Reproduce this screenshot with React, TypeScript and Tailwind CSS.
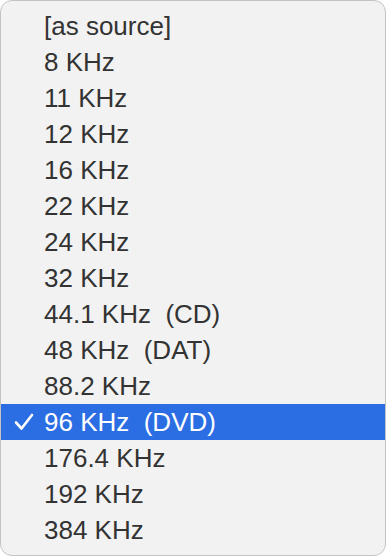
const rates = [
  "[as source]",
  "8 KHz",
  "11 KHz",
  "12 KHz",
  "16 KHz",
  "22 KHz",
  "24 KHz",
  "32 KHz",
  "44.1 KHz  (CD)",
  "48 KHz  (DAT)",
  "88.2 KHz",
  "96 KHz  (DVD)",
  "176.4 KHz",
  "192 KHz",
  "384 KHz",
];

const selected = "96 KHz  (DVD)";

function Check() {
  return (
    <svg width="20" height="18" viewBox="0 0 20 18" fill="none">
      <path
        d="M2 9.5 L7.5 15.5 L18 2"
        stroke="white"
        strokeWidth="2.6"
        strokeLinecap="round"
        strokeLinejoin="round"
      />
    </svg>
  );
}

export default function App() {
  return (
    <div className="w-[386px] h-[556px] bg-white">
      <div
        className="w-full h-full rounded-[12px] border border-[#c4c4c4] bg-[#f2f2f2] py-[7px] overflow-hidden"
        style={{ fontFamily: '"Liberation Sans", Arial, sans-serif' }}
      >
        {rates.map((rate) => {
          const active = rate === selected;
          return (
            <div
              key={rate}
              className={`flex items-center h-[36px] ${active ? "bg-[#2b6de3] text-white" : "text-[#333333]"}`}
            >
              <div className="w-[43px] flex justify-center pl-[2px]">
                {active && <Check />}
              </div>
              <span className="text-[26px] leading-none whitespace-pre">{rate}</span>
            </div>
          );
        })}
      </div>
    </div>
  );
}
